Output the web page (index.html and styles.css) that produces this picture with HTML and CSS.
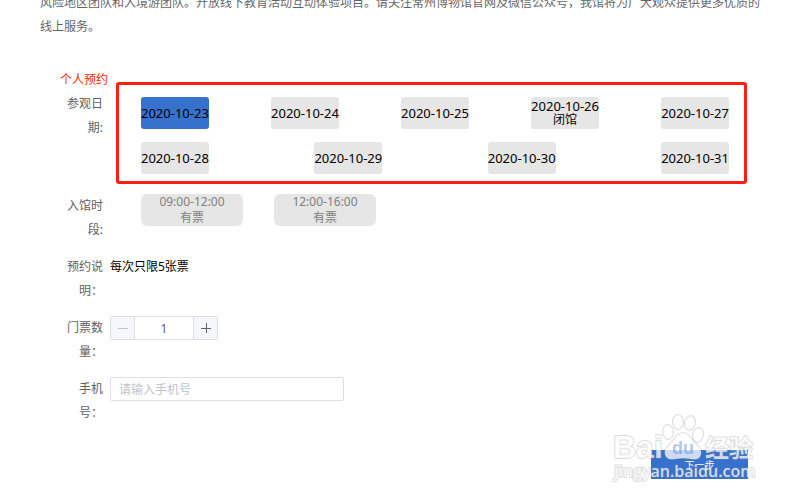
FILE: index.html
```html
<!DOCTYPE html>
<html lang="zh-CN">
<head>
    <meta charset="UTF-8">
    <meta name="viewport" content="width=device-width, initial-scale=1.0">
    <title>个人预约</title>
    <link rel="stylesheet" href="styles.css">
</head>
<body>
    <main class="container">
        <p class="notice">风险地区团队和入境游团队。开放线下教育活动互动体验项目。请关注常州博物馆官网及微信公众号，我馆将为广大观众提供更多优质的线上服务。</p>

        <form class="booking">
            <h1 class="booking-title">个人预约</h1>

            <div class="row row-date" role="group" aria-labelledby="dateLabel">
                <span class="label" id="dateLabel">参观日期:</span>
                <div class="dates">
                    <div class="date-line">
                        <button type="button" class="date active">2020-10-23</button>
                        <button type="button" class="date">2020-10-24</button>
                        <button type="button" class="date">2020-10-25</button>
                        <button type="button" class="date">2020-10-26<span class="closed">闭馆</span></button>
                        <button type="button" class="date">2020-10-27</button>
                    </div>
                    <div class="date-line">
                        <button type="button" class="date">2020-10-28</button>
                        <button type="button" class="date">2020-10-29</button>
                        <button type="button" class="date">2020-10-30</button>
                        <button type="button" class="date">2020-10-31</button>
                    </div>
                </div>
            </div>

            <div class="row" role="group" aria-labelledby="timeLabel">
                <span class="label" id="timeLabel">入馆时段:</span>
                <div class="slots">
                    <button type="button" class="slot">09:00-12:00<br>有票</button>
                    <button type="button" class="slot">12:00-16:00<br>有票</button>
                </div>
            </div>

            <div class="row">
                <span class="label">预约说明：</span>
                <span class="explain">每次只限5张票</span>
            </div>

            <div class="row">
                <label class="label" for="count">门票数量：</label>
                <div class="stepper">
                    <button type="button" class="step minus" aria-label="减少" disabled>
                        <svg width="12" height="12" viewBox="0 0 12 12"><path d="M1 6.5h10"/></svg>
                    </button>
                    <input class="count" id="count" type="text" value="1">
                    <button type="button" class="step plus" aria-label="增加">
                        <svg width="12" height="12" viewBox="0 0 12 12"><path d="M1 6.5h10M6.5 1v10"/></svg>
                    </button>
                </div>
            </div>

            <div class="row">
                <label class="label" for="phone">手机号：</label>
                <input class="phone" id="phone" type="tel" placeholder="请输入手机号">
            </div>

            <div class="actions">
                <button type="submit" class="next">下一步</button>
                <svg class="watermark" width="150" height="80" viewBox="0 0 150 80" aria-hidden="true">
                    <g class="mark">
                        <ellipse cx="60" cy="22" rx="5" ry="7" transform="rotate(-8 60 22)"/>
                        <ellipse cx="70" cy="12" rx="5" ry="7"/>
                        <ellipse cx="82" cy="13" rx="5" ry="7" transform="rotate(12 82 13)"/>
                        <ellipse cx="90" cy="25" rx="5" ry="7" transform="rotate(15 90 25)"/>
                        <path d="M75 23c-6 0-8 6-12 10c-4 4-7 7-6 11c1 5 6 6 10 5c5-1 11-1 16 0c5 1 9 0 10-5c1-4-3-8-6-11c-4-4-6-10-12-10z"/>
                        <text class="brand" x="5" y="48">Bai</text>
                        <text class="brand-cn" x="97" y="47">经验</text>
                        <text class="site" x="6" y="67">jingyan.baidu.com</text>
                    </g>
                    <text class="du" x="64" y="44">du</text>
                </svg>
            </div>
        </form>
    </main>
</body>
</html>
```

FILE: styles.css
```css
* {
    box-sizing: border-box;
}

body {
    margin: 0;
    background-color: #fff;
    color: #606266;
    font-family: "Noto Sans", "Noto Sans CJK SC", sans-serif;
    font-size: 12px;
    line-height: 24px;
}

button,
input {
    margin: 0;
    padding: 0;
    font-family: inherit;
    font-size: 12px;
}

.container {
    display: flow-root;
    padding: 0 40px 21px;
}

.notice {
    margin: -9px 0 29px;
    color: #666;
}

.booking {
    padding-left: 20px;
}

.booking-title {
    margin: 0;
    color: #ff2a00;
    font-size: 12px;
    font-weight: normal;
}

.row {
    display: flex;
    align-items: flex-start;
    margin-bottom: 13px;
}

.row-date {
    margin-bottom: 20px;
}

.label {
    flex: none;
    width: 50px;
    padding-right: 7px;
    text-align: right;
}

/* dates */
.dates {
    position: relative;
    flex: 1;
    display: flex;
    flex-direction: column;
    gap: 13px;
    margin: 5px 31px 0;
}

.dates::after {
    content: "";
    position: absolute;
    inset: -15px -18px -10px -25px;
    border: 3px solid #ff1e14;
    border-radius: 3px;
    pointer-events: none;
}

.date-line {
    display: flex;
    justify-content: space-between;
}

.date {
    height: 32px;
    border: 0;
    border-radius: 3px;
    background-color: #e6e6e6;
    color: #000;
    font-size: 13px;
    line-height: 13px;
}

.date.active {
    background-color: #3672cd;
}

.closed {
    display: block;
    font-size: 12px;
}

/* time slots */
.slots {
    display: flex;
    gap: 31px;
    margin-left: 31px;
}

.slot {
    width: 102px;
    height: 32px;
    border: 0;
    border-radius: 6px;
    background-color: #e6e6e6;
    color: #808080;
    line-height: 16px;
}

.explain {
    color: #000;
}

/* ticket count */
.stepper {
    display: flex;
    width: 108px;
    height: 24px;
    border: 1px solid #dcdfe6;
    border-radius: 2px;
}

.step {
    display: flex;
    align-items: center;
    justify-content: center;
    flex: none;
    width: 24px;
    border: 0;
    background-color: #f5f7fa;
}

.step svg {
    fill: none;
    stroke: #606266;
}

.minus {
    border-right: 1px solid #dcdfe6;
}

.minus svg {
    stroke: #c0c4cc;
}

.plus {
    border-left: 1px solid #dcdfe6;
}

.count {
    flex: 1;
    min-width: 0;
    border: 0;
    color: #606266;
    text-align: center;
}

.phone {
    width: 234px;
    height: 24px;
    padding: 0 8px;
    border: 1px solid #dcdfe6;
    border-radius: 2px;
    color: #606266;
}

.phone::placeholder {
    color: #c0c4cc;
}

.actions {
    position: relative;
    display: flex;
    justify-content: flex-end;
    padding: 12px 12px 0 0;
}

.next {
    width: 97px;
    height: 29px;
    border: 0;
    background-color: #3672cd;
    color: #fff;
    font-size: 10px;
}

/* watermark */
.watermark {
    position: absolute;
    right: 2px;
    bottom: -11px;
    overflow: visible;
    pointer-events: none;
}

.mark {
    fill: #fff;
    fill-opacity: .75;
    stroke: #808080;
    stroke-opacity: .25;
    stroke-width: 2px;
    stroke-linejoin: round;
    paint-order: stroke;
}

.brand {
    font: bold 32px "Liberation Sans", sans-serif;
}

.brand-cn {
    font: bold 24px "Noto Sans CJK SC", sans-serif;
}

.site {
    font: 600 16px "Open Sans", sans-serif;
}

.du {
    fill: #3672cd;
    fill-opacity: .4;
    font: bold 18px "Liberation Sans", sans-serif;
}
```
